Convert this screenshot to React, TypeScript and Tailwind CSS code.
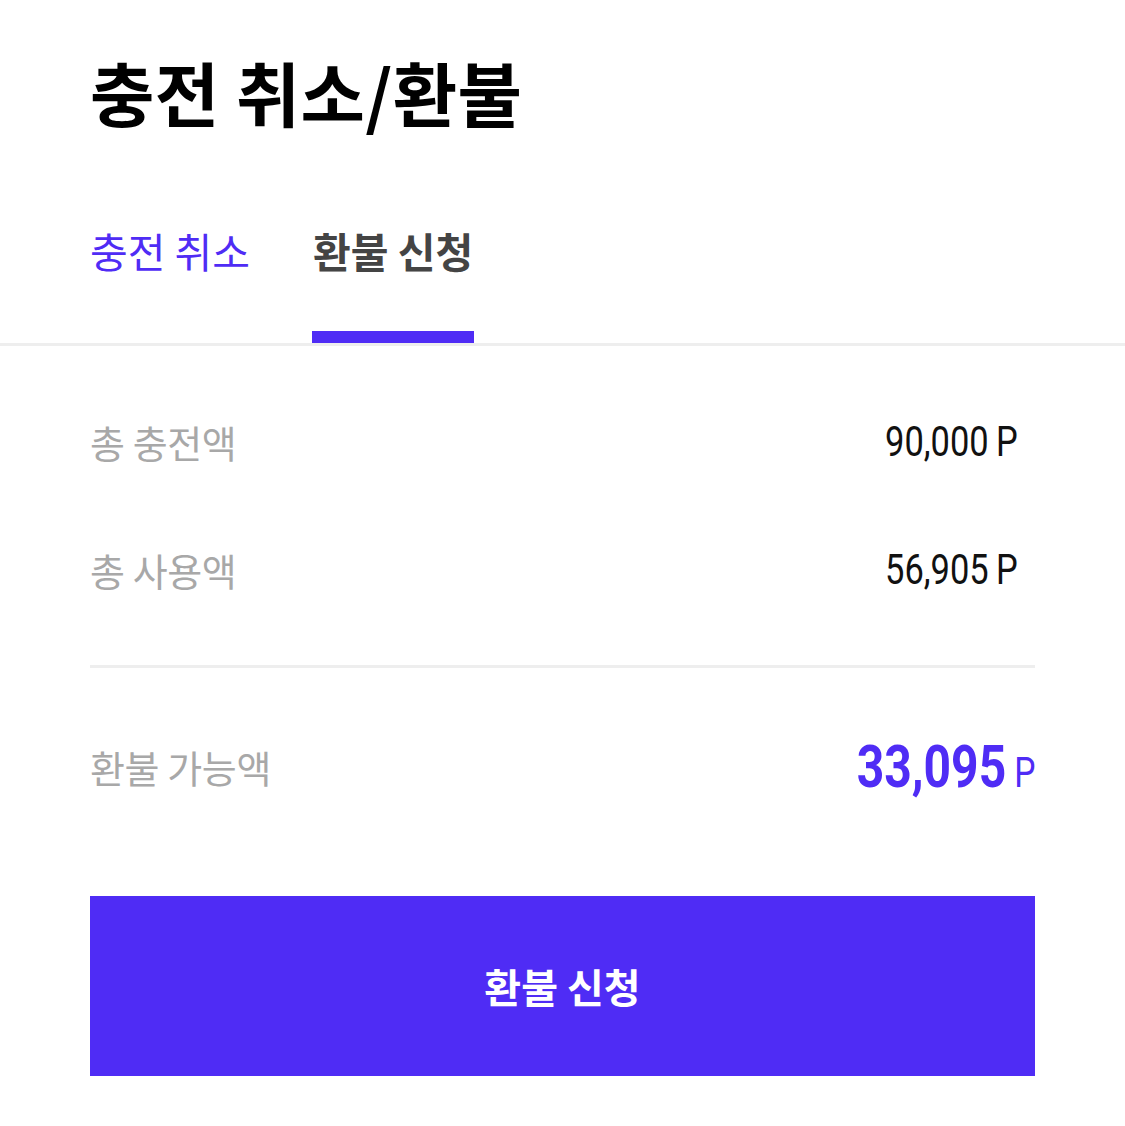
import React from "react";

const KR = "font-['Noto_Sans_CJK_KR','Noto_Sans',sans-serif]";
const NUM = "font-['Roboto','Noto_Sans_CJK_KR',sans-serif]";

function Row({ label, value }: { label: string; value: string }) {
  return (
    <div className="flex items-center justify-between h-[128px] pr-[17px]">
      <span className={`${KR} text-[38px] tracking-[-0.01em] text-[#a8a8a8] leading-none`}>{label}</span>
      <span className={`${NUM} inline-block origin-right scale-x-[0.82] text-[42px] text-[#111] leading-none`}>
        {value}
        <span className="ml-[9px]">P</span>
      </span>
    </div>
  );
}

export default function App() {
  return (
    <div className="w-[1125px] h-[1126px] bg-white overflow-hidden">
      <div className="px-[90px] pt-[48px]">
        <h1 className={`${KR} text-[70px] font-bold tracking-[0.005em] text-black leading-[88px]`}>충전 취소/환불</h1>
      </div>
      <div className="mt-[88px] flex gap-[62px] px-[90px] border-b-[3px] border-[#eeeeee]">
        <div className="h-[119px] flex items-start pt-[2px]">
          <span className={`${KR} text-[41px] text-[#4f2cf5] leading-[48px]`}>충전 취소</span>
        </div>
        <div className="h-[119px] flex items-start pt-[2px] border-b-[12px] border-[#4f2cf5] -mb-[3px] px-[1px]">
          <span className={`${KR} text-[41px] font-bold text-[#444444] leading-[48px]`}>환불 신청</span>
        </div>
      </div>
      <div className="px-[90px] pt-[32px]">
        <Row label="총 충전액" value="90,000" />
        <Row label="총 사용액" value="56,905" />
        <div className="mt-[31px] h-[3px] bg-[#eeeeee]" />
        <div className="flex items-center justify-between h-[198px]">
          <span className={`${KR} text-[38px] tracking-[-0.01em] text-[#a8a8a8] leading-none`}>환불 가능액</span>
          <span className="inline-flex items-baseline origin-right scale-x-[0.80] text-[#4f2cf5] leading-none">
            <span className={`${NUM} text-[60px] font-bold`}>33,095</span>
            <span className={`${NUM} text-[42px] ml-[10px]`}>P</span>
          </span>
        </div>
        <button className="mt-[30px] w-full h-[180px] bg-[#4f2cf5] flex items-center justify-center">
          <span className={`${KR} text-[40px] font-bold text-white leading-none`}>환불 신청</span>
        </button>
      </div>
    </div>
  );
}
